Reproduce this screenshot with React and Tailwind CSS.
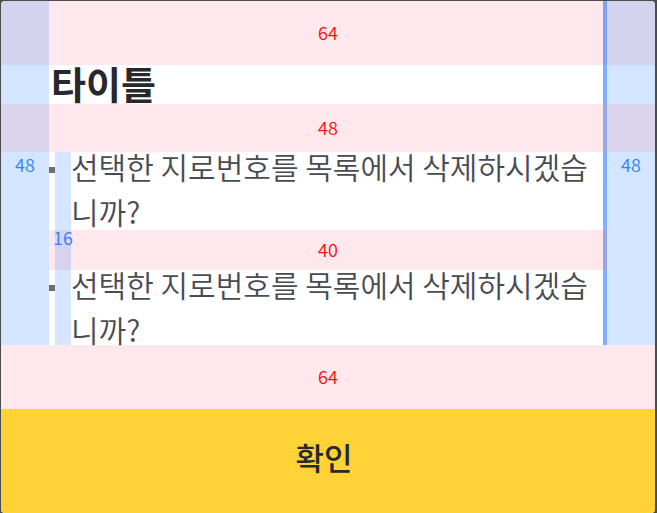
const message = '선택한 지로번호를 목록에서 삭제하시겠습니까?';

function SpacingBand({ value, className, side, line, fill }) {
  return (
    <div className={`flex ${className}`}>
      <div className={`w-12 shrink-0 ${side}`} />
      <div className={`flex flex-1 items-center justify-center pb-0.5 pl-1 text-lg font-[350] text-[#ff0a0a] ${fill}`}>
        {value}
      </div>
      <div className={`w-1 shrink-0 ${line}`} />
      <div className={`w-12 shrink-0 ${side}`} />
    </div>
  );
}

function MessageItem({ className, label }) {
  return (
    <li className="flex">
      <div className="mt-[15px] size-1.5 shrink-0 bg-[#6c6e78]" />
      <div className="relative w-4 shrink-0 bg-[#d5e5ff]">
        {label && (
          <span className="absolute top-full left-1/2 z-10 -translate-x-1/2 text-lg leading-3.5 font-[350] text-[#2f80ff]">
            {label}
          </span>
        )}
      </div>
      <p className={`min-w-0 flex-1 text-[30px] leading-[45px] font-[350] text-[#484b53] ${className}`}>
        {message}
      </p>
    </li>
  );
}

export default function App() {
  return (
    <main className="min-h-screen bg-[#4b4b4b] pt-px pr-0.5 pl-px font-['Noto_Sans_CJK_KR','Noto_Sans',sans-serif]">
      <section className="overflow-hidden rounded-[4px] bg-white" aria-labelledby="dialog-title">
        <SpacingBand value="64" className="h-16" side="bg-[#d3d3f0]" line="bg-[#7ea4f7]" fill="bg-[#fee8ed]" />

        <div className="flex h-[39px]">
          <div className="w-12 shrink-0 bg-[#d3e5ff]" />
          <h1 id="dialog-title" className="flex-1 pl-0.5 text-[38px] leading-9 font-bold text-[#26282c]">
            타이틀
          </h1>
          <div className="w-1 shrink-0 bg-[#7db0ff]" />
          <div className="w-12 shrink-0 bg-[#d3e5ff]" />
        </div>

        <SpacingBand value="48" className="h-12" side="bg-[#dad4ec]" line="bg-[#97a8ea]" fill="bg-[#fee8ed]" />

        <div className="flex">
          <div className="w-12 shrink-0 bg-[#d3e5ff] text-center text-lg leading-6 font-[350] text-[#2f80ff]">48</div>
          <ul className="min-w-0 flex-1">
            <MessageItem className="-mt-2 -mb-1" label="16" />
            <li className="flex h-10 bg-[#fee8ed]" aria-hidden="true">
              <div className="ml-1.5 w-4 shrink-0 bg-[#d5d4ee]" />
              <div className="-ml-[22px] flex flex-1 items-center justify-center pb-0.5 pl-1 text-lg font-[350] text-[#ff0a0a]">40</div>
            </li>
            <MessageItem className="-mt-2 -mb-[7px]" />
          </ul>
          <div className="w-1 shrink-0 bg-[#7db0ff]">
            <div className="mt-[78px] h-10 bg-[#97a8ea]" />
          </div>
          <div className="w-12 shrink-0 bg-[#d3e5ff] text-center text-lg leading-6 font-[350] text-[#2f80ff]">48</div>
        </div>

        <div className="flex h-16 items-center justify-center bg-[#fee8ed] pb-0.5 text-lg font-[350] text-[#ff0a0a]">64</div>

        <button type="button" className="block h-26 w-full bg-[#ffd237] pr-2 pb-2 text-[31px] font-medium text-[#26282c]">
          확인
        </button>
      </section>
    </main>
  );
}
